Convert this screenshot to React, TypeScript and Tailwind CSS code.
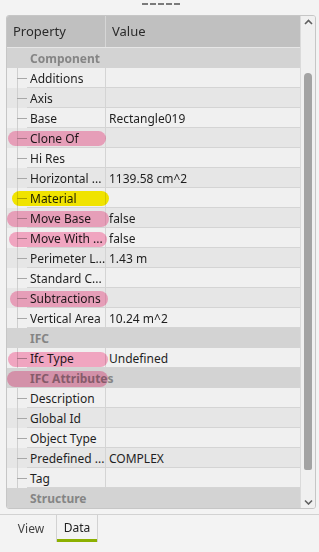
import React from "react";

type Pill = { l: number; w: number; t: number; h: number; c: "pink" | "yellow" };
type Row =
  | { kind: "group"; label: string; pill?: Pill }
  | { kind: "prop"; label: string; value?: string; alt: boolean; pill?: Pill };

const rows: Row[] = [
  { kind: "group", label: "Component" },
  { kind: "prop", label: "Additions", alt: false },
  { kind: "prop", label: "Axis", alt: true },
  { kind: "prop", label: "Base", value: "Rectangle019", alt: false },
  { kind: "prop", label: "Clone Of", alt: true, pill: { l: 1, w: 98, t: 3, h: 15, c: "pink" } },
  { kind: "prop", label: "Hi Res", alt: false },
  { kind: "prop", label: "Horizontal ...", value: "1139.58 cm^2", alt: true },
  { kind: "prop", label: "Material", alt: false, pill: { l: 5, w: 97, t: 3, h: 15, c: "yellow" } },
  { kind: "prop", label: "Move Base", value: "false", alt: true, pill: { l: 0, w: 102, t: 3, h: 16, c: "pink" } },
  { kind: "prop", label: "Move With ...", value: "false", alt: false, pill: { l: 2, w: 98, t: 4, h: 15, c: "pink" } },
  { kind: "prop", label: "Perimeter L...", value: "1.43 m", alt: true },
  { kind: "prop", label: "Standard C...", alt: false },
  { kind: "prop", label: "Subtractions", alt: true, pill: { l: 3, w: 98, t: 3, h: 16, c: "pink" } },
  { kind: "prop", label: "Vertical Area", value: "10.24 m^2", alt: false },
  { kind: "group", label: "IFC" },
  { kind: "prop", label: "Ifc Type", value: "Undefined", alt: false, pill: { l: 1, w: 100, t: 4, h: 15, c: "pink" } },
  { kind: "group", label: "IFC Attributes", pill: { l: 0, w: 101, t: 3, h: 16, c: "pink" } },
  { kind: "prop", label: "Description", alt: false },
  { kind: "prop", label: "Global Id", alt: true },
  { kind: "prop", label: "Object Type", alt: false },
  { kind: "prop", label: "Predefined ...", value: "COMPLEX", alt: true },
  { kind: "prop", label: "Tag", alt: false },
  { kind: "group", label: "Structure" },
];

function PillMark({ p }: { p: Pill }) {
  return (
    <div
      className={
        "absolute rounded-full mix-blend-multiply pointer-events-none " +
        (p.c === "pink" ? "bg-[#ffafcc]" : "bg-[#fff200]")
      }
      style={{ left: p.l, width: p.w, top: p.t, height: p.h }}
    />
  );
}

function RowView({ r }: { r: Row }) {
  if (r.kind === "group") {
    return (
      <div className="relative h-[20px] flex items-center bg-[#d3d3d3]">
        <span className="pl-[23px] pt-[2px] font-bold text-[#858585] leading-none">{r.label}</span>
        {r.pill && <PillMark p={r.pill} />}
      </div>
    );
  }
  return (
    <div className={"relative h-[20px] flex " + (r.alt ? "bg-[#e6e6e6]" : "bg-[#f0f0f0]")}>
      <div className="relative w-[20px] h-full shrink-0">
        <div className="absolute left-[10px] top-0 bottom-0 w-px bg-[#cfcfcf]" />
        <div className="absolute left-[10px] top-[10px] w-[10px] h-px bg-[#a8a8a8]" />
      </div>
      <div className="flex-1 flex border-b border-[#d4d4d4]">
        <div className="w-[79px] shrink-0 pl-[3px] pt-[2px] flex items-center border-r border-[#d4d4d4] text-[#1f1f1f] whitespace-nowrap overflow-hidden">
          {r.label}
        </div>
        <div className="flex-1 pl-[3px] pt-[2px] flex items-center text-[#1f1f1f] whitespace-nowrap">{r.value ?? ""}</div>
      </div>
      {r.pill && <PillMark p={r.pill} />}
    </div>
  );
}

export default function App() {
  return (
    <div className="w-[319px] h-[552px] bg-[#f3f3f3] flex flex-col text-[12px] font-['Noto_Sans',sans-serif] overflow-hidden">
      <div className="h-[15px] flex justify-center pt-[3px] pl-[3px]">
        <div className="flex gap-[2px] h-[2px]">
          <div className="w-[6px] h-[2px] bg-[#7a7a7a]" />
          <div className="w-[6px] h-[2px] bg-[#7a7a7a]" />
          <div className="w-[6px] h-[2px] bg-[#7a7a7a]" />
          <div className="w-[6px] h-[2px] bg-[#7a7a7a]" />
          <div className="w-[6px] h-[2px] bg-[#7a7a7a]" />
        </div>
      </div>
      <div className="ml-[6px] w-[310px] h-[494px] border border-[#c6c6c6] rounded-[3px] flex overflow-hidden bg-[#f0f0f0]">
        <div className="flex-1 flex flex-col min-w-0">
          <div className="h-[32px] bg-[#c0c0c0] flex border-b border-[#e6e6e6] text-[#2a2a2a] text-[13px]">
            <div className="w-[99px] pl-[6px] pt-[1px] flex items-center border-r border-[#d6d6d6]">Property</div>
            <div className="flex-1 pl-[6px] pt-[1px] flex items-center">Value</div>
          </div>
          <div className="flex flex-col">
            {rows.map((r, i) => (
              <RowView key={i} r={r} />
            ))}
          </div>
        </div>
        <div className="w-[15px] shrink-0 bg-[#f0f0f0] border-l border-[#dadada] flex flex-col items-center">
          <svg width="9" height="6" viewBox="0 0 9 6" className="mt-[3px]">
            <path d="M1 5 L4.5 1.5 L8 5" fill="none" stroke="#606060" strokeWidth="1.6" />
          </svg>
          <div className="mt-[48px] w-[8px] h-[397px] rounded-t-[4px] rounded-b-[2px] bg-[#a3a3a3]" />
          <div className="flex-1" />
          <svg width="9" height="6" viewBox="0 0 9 6" className="mb-[3px]">
            <path d="M1 1.5 L4.5 5 L8 1.5" fill="none" stroke="#606060" strokeWidth="1.6" />
          </svg>
        </div>
      </div>
      <div className="mt-[5px] border-t border-[#d2d2d2] flex h-[28px]">
        <div className="w-[56px] flex items-center justify-center pl-[6px] pt-[1px] text-[#444]">View</div>
        <div className="w-[42px] flex flex-col border-x border-[#d2d2d2] -mt-px">
          <div className="flex-1 flex items-center justify-center pt-[2px] text-[#222]">Data</div>
          <div className="h-[3px] bg-[#8cb000]" />
        </div>
      </div>
    </div>
  );
}
